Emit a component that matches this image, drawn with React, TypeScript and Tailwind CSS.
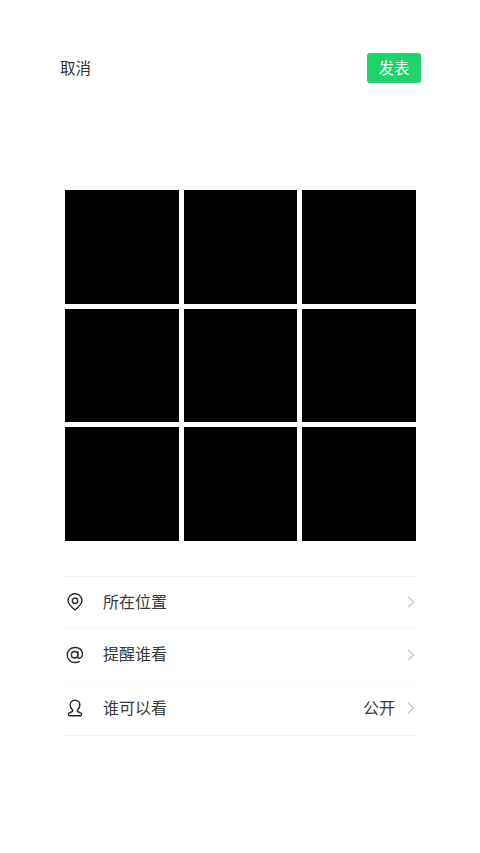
import type { ReactNode } from 'react';

const cjk = 'font-["Noto_Sans_CJK_SC","Noto_Sans",sans-serif]';

function Chevron() {
  return (
    <svg width="8" height="12" viewBox="0 0 8 12" fill="none" className="ml-[12px] mr-[1px] shrink-0">
      <path d="M1 0.8 L6.6 6 L1 11.2" stroke="#cacaca" strokeWidth="1.5" />
    </svg>
  );
}

function PinIcon() {
  return (
    <svg width="18" height="18" viewBox="0 0 20 20" fill="none" stroke="#2a2a2a" strokeWidth="1.5">
      <path d="M10 18.8 C6.2 15.6 2.2 12.2 2.2 8.6 a7.8 7.8 0 0 1 15.6 0 C17.8 12.2 13.8 15.6 10 18.8 Z" />
      <circle cx="10" cy="8.6" r="3" />
    </svg>
  );
}

function AtIcon() {
  return (
    <svg width="18" height="18" viewBox="0 0 20 20" fill="none" stroke="#2a2a2a" strokeWidth="1.6">
      <circle cx="9.6" cy="9.8" r="3.6" />
      <path d="M13.4 6 L12.9 11.4 C12.8 13.2 14.2 13.9 15.4 13.4 C17.6 12.5 18.6 10.4 18.2 8 C17.5 3.9 14 1.6 10 1.6 C5.2 1.6 1.4 5.2 1.4 10 C1.4 14.8 5.2 18.4 10 18.4 C12 18.4 13.8 17.9 15.2 17" />
    </svg>
  );
}

function PersonIcon() {
  return (
    <svg width="18" height="18" viewBox="0 0 20 20" fill="none" stroke="#2a2a2a" strokeWidth="1.6">
      <path d="M7.4 12.6 C5.6 10.9 4.6 8.9 4.6 6.8 C4.6 3.6 7 1.4 10 1.4 C13 1.4 15.4 3.6 15.4 6.8 C15.4 8.9 14.4 10.9 12.6 12.6 C12.2 13.2 12.6 13.8 13.4 14.2 L16.6 15.6 C17.6 16.2 17.6 18.6 16.2 18.6 L3.8 18.6 C2.4 18.6 2.4 16.2 3.4 15.6 L6.6 14.2 C7.4 13.8 7.8 13.2 7.4 12.6 Z" />
    </svg>
  );
}

function Row({ icon, label, value, className }: { icon: ReactNode; label: string; value?: string; className: string }) {
  return (
    <div className={`flex items-center ${className}`}>
      <div className="flex w-5 shrink-0 justify-center">{icon}</div>
      <span className="ml-[18px] flex-1 pb-[3px] text-[16px] text-[#3a3a3a]">{label}</span>
      {value && <span className="pb-[3px] text-[16px] text-[#3a3a3a]">{value}</span>}
      <Chevron />
    </div>
  );
}

export default function App() {
  return (
    <div className={`h-[853px] w-[480px] overflow-hidden bg-white ${cjk}`}>
      <header className="flex items-center justify-between pl-[60px] pr-[59px] pt-[53px]">
        <span className="pb-[2px] text-[15.5px] leading-[28px] text-[#333333]">取消</span>
        <button className="h-[30px] w-[54px] rounded-[3px] bg-[#1fd36a] pb-[2px] text-[15.5px] leading-[28px] text-white/95">
          发表
        </button>
      </header>

      <div className="ml-[65px] mt-[107px] grid w-[351px] grid-cols-3 gap-[5px]">
        {Array.from({ length: 9 }).map((_, i) => (
          <div key={i} className="h-[113.67px] bg-black" />
        ))}
      </div>

      <div className="ml-[65px] mt-[35px] w-[351px] border-t border-[#f3f3f3]">
        <Row icon={<PinIcon />} label="所在位置" className="h-[52px] border-b border-[#f5f5f5]" />
        <Row icon={<AtIcon />} label="提醒谁看" className="h-[53px] border-b border-[#fbfbfb]" />
        <Row icon={<PersonIcon />} label="谁可以看" value="公开" className="h-[54px] border-b border-[#f3f3f3]" />
      </div>
    </div>
  );
}
